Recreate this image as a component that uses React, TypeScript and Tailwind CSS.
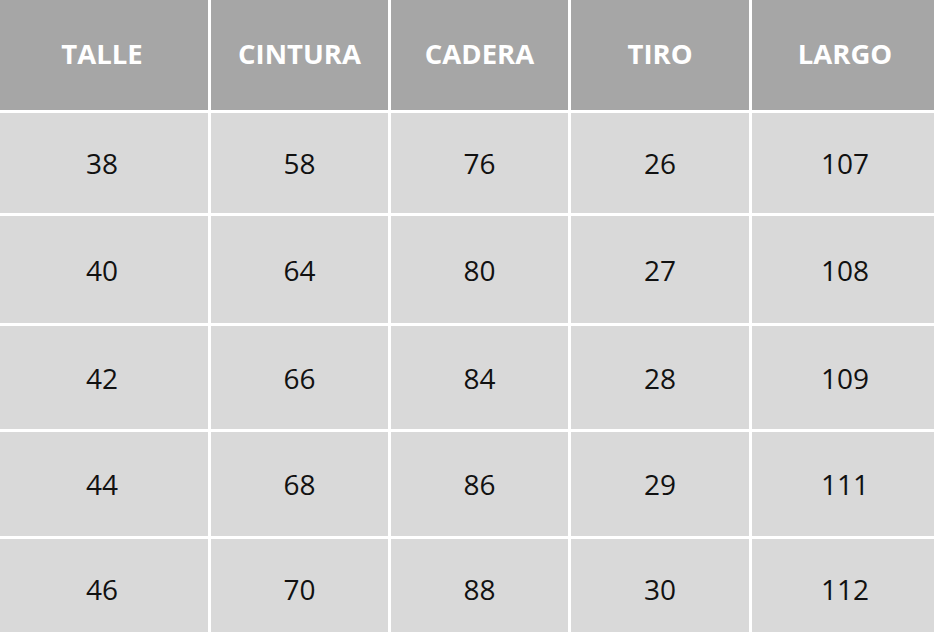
import React from 'react';

const headers = ['TALLE', 'CINTURA', 'CADERA', 'TIRO', 'LARGO'];

const rows = [
  { h: 'h-[100px]', cells: ['38', '58', '76', '26', '107'] },
  { h: 'h-[107px]', cells: ['40', '64', '80', '27', '108'] },
  { h: 'h-[103px]', cells: ['42', '66', '84', '28', '109'] },
  { h: 'h-[104px]', cells: ['44', '68', '86', '29', '111'] },
  { h: 'h-[100px]', cells: ['46', '70', '88', '30', '112'] },
];

// first column text sits a bit left of centre, last a bit right
const colPad = ['pr-[4px]', '', '', '', 'pl-[4px]'];

export default function App() {
  return (
    <div className="w-[934px] h-[632px] overflow-hidden bg-white font-['Open_Sans',sans-serif]">
      <div className="grid grid-cols-[208px_177px_177px_178px_1fr] gap-[3px]">
        {headers.map((h, j) => (
          <div key={h} className={`h-[110px] pb-[3px] bg-[#a6a6a6] flex items-center justify-center text-white font-bold text-[27.5px] ${colPad[j]}`}>
            {h}
          </div>
        ))}
        {rows.map((r, i) =>
          r.cells.map((c, j) => (
            <div key={`${i}-${j}`} className={`${r.h} bg-[#d9d9d9] flex items-center justify-center text-[#111] text-[28px] ${colPad[j]}`}>
              {c}
            </div>
          ))
        )}
      </div>
    </div>
  );
}
